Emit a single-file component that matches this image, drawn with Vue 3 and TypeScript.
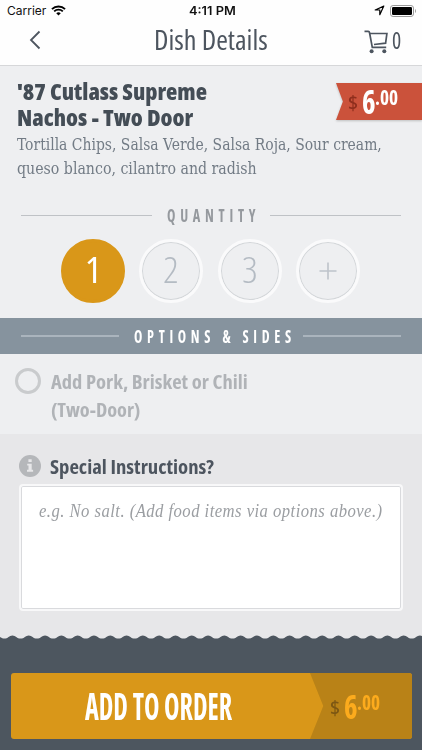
<script setup lang="ts">
import { ref, type Directive } from 'vue'

interface Quantity {
  label: string
  value: number
  width: number
}

// Condenses a line of text horizontally until it occupies the given width.
const vFit: Directive<HTMLElement, number> = {
  mounted(el, { value }) {
    const natural = el.offsetWidth
    if (!natural) return
    el.style.transform = `scaleX(${value / natural})`
    el.style.marginRight = `${value - natural}px`
  },
}

const quantities: Quantity[] = [
  { label: '1', value: 1, width: 16 },
  { label: '2', value: 2, width: 16 },
  { label: '3', value: 3, width: 16 },
]
const quantity = ref(1)
const optionSelected = ref(false)
const notes = ref('')

// Scalloped upper edge of the footer.
const period = 16.3
let wave = 'M-12 3.6'
for (let i = 0; i < 28; i++) {
  const x = -12 + i * period
  wave += ` C${x + 3.6} 3.6 ${x + 5} .4 ${x + period / 2} .4 S${x + period - 3.6} 3.6 ${x + period} 3.6`
}
wave += ' V8 H-12 Z'
</script>

<template>
  <main class="screen">
    <div class="status">
      <div class="status-left">
        <span v-fit="39" class="fit">Carrier</span>
        <svg class="wifi" viewBox="0 0 16 11" width="15" height="11">
          <path d="M1 4.1A10 10 0 0 1 15 4.1M3.4 6.5a6.6 6.6 0 0 1 9.2 0" fill="none" stroke="#000" stroke-width="2" />
          <path d="M5.6 8.4a3.5 3.5 0 0 1 4.8 0L8 10.8z" />
        </svg>
      </div>
      <strong class="clock"><span v-fit="47" class="fit">4:11 PM</span></strong>
      <div class="status-right">
        <svg viewBox="0 0 11 11" width="11" height="11">
          <path d="M9.8 1.1 1.2 5h4.6v4.7z" fill="none" stroke="#000" stroke-width="1.2" stroke-linejoin="round" />
        </svg>
        <svg viewBox="0 0 27 12" width="27" height="12">
          <rect x=".5" y=".5" width="23" height="11" rx="2.6" fill="none" stroke="#999" />
          <rect x="2" y="2" width="20" height="8" rx="1.2" />
          <path d="M25 4v4c1.3-.6 1.3-3.4 0-4z" fill="#999" />
        </svg>
      </div>
    </div>

    <header class="nav">
      <button class="plain back" aria-label="Back">
        <svg viewBox="0 0 12 20" width="12" height="20"><path d="M10.500 1.500 2 10l8.500 8.500" fill="none" stroke="#4d555f" stroke-width="1.800" /></svg>
      </button>
      <h1 class="title"><span v-fit="114" class="fit">Dish Details</span></h1>
      <button class="plain cart" aria-label="Cart">
        <svg class="cart-icon" viewBox="0 0 25 24" width="25" height="24" fill="none" stroke="#4d555f" stroke-width="1.700">
          <path d="M.5 1.300h3.700q1.100 0 1.300 1.200L8.300 17.400h13.900M5.900 3.500h17l-1.300 9.700-11.600 1.300" />
          <circle cx="7.600" cy="21.300" r="2" fill="#4d555f" stroke="none" />
          <circle cx="20.300" cy="21.300" r="2" fill="#4d555f" stroke="none" />
        </svg>
        <span v-fit="9" class="fit count">0</span>
      </button>
    </header>

    <section class="dish">
      <div class="info">
        <h2 class="name">
          <span v-fit="190" class="fit">'87 Cutlass Supreme<br />Nachos - Two Door</span>
        </h2>
        <p class="desc">
          <span v-fit="365" class="fit">Tortilla Chips, Salsa Verde, Salsa Roja, Sour cream,</span>
          <span v-fit="240" class="fit">queso blanco, cilantro and radish</span>
        </p>
      </div>
      <div class="flag-shadow">
        <div class="price flag">
          <span v-fit="10" class="fit currency">$</span>
          <span v-fit="14" class="fit whole">6</span>
          <span v-fit="23" class="fit cents">.00</span>
        </div>
      </div>
    </section>

    <section class="quantity">
      <div class="divider">
        <i class="rule"></i>
        <span class="divider-text"><span v-fit="93" class="fit">QUANTITY</span></span>
        <i class="rule"></i>
      </div>
      <div class="picker">
        <button
          v-for="q in quantities"
          :key="q.value"
          class="plain dot"
          :class="{ active: quantity === q.value }"
          @click="quantity = q.value"
        >
          <span v-fit="q.width" class="fit">{{ q.label }}</span>
        </button>
        <button class="plain dot" aria-label="More" @click="quantity++">
          <svg viewBox="0 0 18 18" width="18" height="18"><path d="M9 .5v17M.5 9h17" stroke="#bdc3ca" stroke-width="1.600" /></svg>
        </button>
      </div>
    </section>

    <div class="divider band">
      <i class="rule"></i>
      <span class="divider-text"><span v-fit="162" class="fit">OPTIONS &amp; SIDES</span></span>
      <i class="rule"></i>
    </div>

    <section class="option" @click="optionSelected = !optionSelected">
      <span class="radio" :class="{ checked: optionSelected }"></span>
      <div class="option-text">
        <span v-fit="197" class="fit">Add Pork, Brisket or Chili</span>
        <span v-fit="89" class="fit">(Two-Door)</span>
      </div>
    </section>

    <section class="special">
      <h3 class="special-title">
        <svg viewBox="0 0 22 22" width="22" height="22">
          <circle cx="11" cy="11" r="11" fill="#b5b7ba" />
          <path d="M9.400 4.200h3.300v2.900H9.400zM8.200 8.700h4.500v6.100h1.400v1.900H8v-1.900h1.500v-4.200H8.200z" fill="#e7e7e9" />
        </svg>
        <span v-fit="163.500" class="fit">Special Instructions?</span>
      </h3>
      <div class="field">
        <span v-if="!notes" v-fit="343.500" class="fit">e.g. No salt. (Add food items via options above.)</span>
        <span v-else>{{ notes }}</span>
      </div>
    </section>

    <footer class="footer">
      <svg class="wave" viewBox="0 0 422 5" width="422" height="5"><path :d="wave" fill="#4d565f" /></svg>
      <div class="footer-body">
        <button class="plain order">
          <span class="order-label"><span v-fit="147" class="fit">ADD TO ORDER</span></span>
          <span class="price total">
            <span v-fit="10" class="fit currency">$</span>
            <span v-fit="14" class="fit whole">6</span>
            <span v-fit="23" class="fit cents">.00</span>
          </span>
        </button>
      </div>
    </footer>
  </main>
</template>

<style>
body {
  margin: 0;
  background: #4d565f;
}
</style>

<style scoped>
.screen {
  width: 422px;
  height: 750px;
  overflow: hidden;
  display: flex;
  flex-direction: column;
  background: #eeeff1;
  color: #4d555f;
  font-family: 'Open Sans', 'Noto Sans', sans-serif;
  font-stretch: 75%;
}
.screen * {
  box-sizing: border-box;
}
.fit {
  display: inline-block;
  white-space: nowrap;
  transform-origin: left center;
  flex: none;
}
.plain {
  border: 0;
  padding: 0;
  margin: 0;
  background: none;
  color: inherit;
  font: inherit;
}
h1,
h2,
h3,
p {
  margin: 0;
}
.status {
  height: 21px;
  flex: none;
  display: grid;
  grid-template-columns: 1fr auto 1fr;
  align-items: center;
  padding: 0 5px 0 7px;
  background: #fefefe;
  color: #111;
  font: 12px/21px Inter, 'Liberation Sans', sans-serif;
}
.status-left,
.status-right {
  display: flex;
  align-items: center;
  gap: 5px;
}
.status-right {
  justify-content: flex-end;
}
.clock {
  font-weight: 600;
}
.nav {
  height: 45px;
  flex: none;
  display: grid;
  grid-template-columns: 1fr auto 1fr;
  align-items: center;
  padding: 0 21px 6px 29px;
  border-bottom: 1px solid #d6d7d9;
  background: #fefefe;
}
.back {
  justify-self: start;
  display: flex;
}
.title {
  padding-right: 8px;
  font-size: 26.5px;
  line-height: 37px;
  font-weight: 400;
}
.cart {
  display: flex;
  justify-self: end;
  align-items: center;
  gap: 3px;
  height: 28px;
}
.cart-icon {
  margin-top: 3px;
}
.count {
  font-size: 24px;
  line-height: 28px;
  font-weight: 500;
}
.dish {
  height: 130px;
  flex: none;
  display: flex;
  justify-content: space-between;
  padding: 13px 0 0 17px;
}
.info {
  width: 319px;
}
.desc,
.option-text {
  display: flex;
  flex-direction: column;
  align-items: flex-start;
}
.name {
  height: 51px;
  font-size: 23px;
  line-height: 25.5px;
  font-weight: 800;
  color: #444d56;
}
.desc {
  padding-top: 3px;
  font-family: 'DejaVu Serif Condensed', 'DejaVu Serif', serif;
  font-size: 16px;
  line-height: 23.7px;
  color: #727b85;
}
.flag-shadow {
  padding-top: 4px;
  filter: drop-shadow(0 1px 1px #0003);
}
.price {
  display: flex;
  align-items: flex-start;
  font-weight: 700;
}
.flag {
  width: 86px;
  height: 37px;
  padding: 2px 0 0 12px;
  background: #cb523b;
  color: #fff;
  clip-path: polygon(0 0, 100% 0, 100% 100%, 0 100%, 8% 50%);
}
.currency {
  margin-right: 4px;
  font-size: 20px;
  line-height: 36px;
  font-weight: 600;
  color: #8f2e1d;
}
.whole {
  margin-left: 4px;
  font-size: 33px;
  line-height: 33px;
}
.cents {
  font-size: 21px;
  line-height: 25px;
}
.quantity {
  height: 122px;
  flex: none;
}
.divider {
  display: flex;
  align-items: center;
  padding: 0 21px;
}
.rule {
  flex: 1;
  height: 1px;
  background: #bfc2c6;
}
.divider-text {
  padding: 0 9px 0 15px;
  font-size: 18px;
  line-height: 38px;
  font-weight: 700;
  letter-spacing: 6px;
  color: #95999e;
}
.quantity .divider {
  height: 38px;
}
.quantity .divider-text {
  padding-bottom: 1px;
}
.picker {
  display: flex;
  gap: 14.3px;
  padding: 5px 0 0 61px;
}
.dot {
  width: 64px;
  height: 64px;
  display: flex;
  align-items: center;
  justify-content: center;
  border-radius: 50%;
  border: 3px solid #fafafb;
  box-shadow: inset 0 0 0 1px #d3d6d9;
  font-size: 36px;
  line-height: 50px;
  font-weight: 300;
  color: #b4bbc3;
}
.dot .fit {
  margin-top: -2px;
}
.dot.active {
  border-color: #d99719;
  background: #d99719;
  box-shadow: none;
  color: #fff;
  font-weight: 400;
}
.band {
  height: 36px;
  flex: none;
  background: #86939e;
}
.band .rule {
  height: 2px;
  background: #aab4bd;
}
.band .divider-text {
  color: #fff;
  padding: 0 7px 0 15px;
  line-height: 36px;
}
.option {
  height: 80px;
  flex: none;
  display: flex;
  padding: 14px 15px;
  gap: 10px;
}
.radio {
  width: 26px;
  height: 26px;
  flex: none;
  border: 3px solid #c9cbcd;
  border-radius: 50%;
}
.radio.checked {
  background: #d99719;
}
.option-text {
  font-size: 20px;
  line-height: 28px;
  font-weight: 700;
  color: #b0b3b7;
}
.special {
  height: 201px;
  flex: none;
  padding: 18px 19px 0;
  background: #e7e7e9;
}
.special-title {
  height: 32px;
  display: flex;
  align-items: flex-start;
  gap: 9px;
  padding-top: 3px;
  font-size: 20px;
  line-height: 24px;
  font-weight: 700;
  color: #4d555f;
}
.field {
  height: 127px;
  border: 2px solid #f8f8f9;
  border-radius: 4px;
  box-shadow: inset 0 0 0 1px #d9dadd;
  background: #fff;
  padding: 13px 18px;
  font: italic 18.5px/24px 'Liberation Serif', serif;
  letter-spacing: 0.5px;
  color: #9b9ea2;
}
.footer {
  flex: 1;
  display: flex;
  flex-direction: column;
  background: #e7e7e9;
}
.wave {
  display: block;
  flex: none;
}
.footer-body {
  flex: 1;
  padding: 33px 10px 0 11px;
  background: #4d565f;
}
.order {
  width: 401px;
  height: 66px;
  display: flex;
  overflow: hidden;
  border-radius: 3px;
  background: #d99719;
  color: #fff;
}
.order-label {
  flex: 1;
  padding-right: 3px;
  font-size: 37px;
  line-height: 66px;
  font-weight: 700;
}
.total {
  width: 102px;
  height: 66px;
  padding: 17px 0 0 20px;
  background: #b98217;
  color: #fcab1d;
  clip-path: polygon(0 0, 100% 0, 100% 100%, 0 100%, 13% 50%);
}
.total .currency {
  color: #7d5713;
}
</style>
